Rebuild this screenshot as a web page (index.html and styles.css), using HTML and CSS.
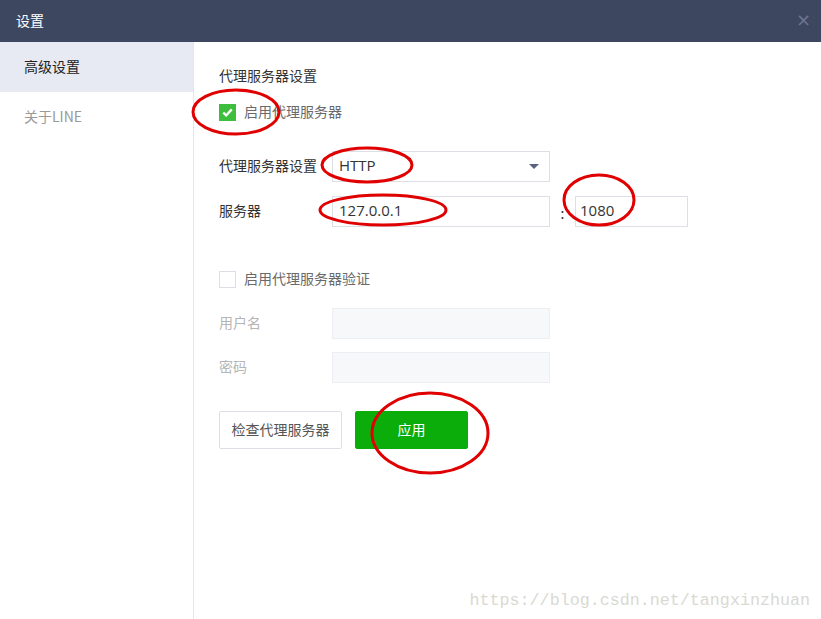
FILE: index.html
```html
<!DOCTYPE html>
<html lang="zh">
<head>
<meta charset="utf-8">
<title>设置</title>
<link rel="stylesheet" href="styles.css">
</head>
<body>
<div class="window">
  <header class="titlebar">
    <span class="title">设置</span>
    <span class="close">×</span>
  </header>
  <div class="main">
    <nav class="sidebar">
      <div class="nav-item active">高级设置</div>
      <div class="nav-item">关于LINE</div>
    </nav>
    <section class="content">
      <h2 class="heading">代理服务器设置</h2>
      <label class="check-row">
        <span class="checkbox checked">
          <svg width="11" height="9" viewBox="0 0 11 9"><path d="M1.3 4.6 L4.2 7.3 L9.8 1.4" fill="none" stroke="#fff" stroke-width="2.3"/></svg>
        </span>
        <span class="check-label">启用代理服务器</span>
      </label>
      <div class="field-row row-select">
        <span class="label">代理服务器设置</span>
        <div class="select">
          <span>HTTP</span>
          <svg class="arrow" width="10" height="5" viewBox="0 0 10 5"><path d="M0 0 H10 L5 5 Z" fill="#59627a"/></svg>
        </div>
      </div>
      <div class="field-row row-server">
        <span class="label">服务器</span>
        <div class="input">127.0.0.1</div>
        <span class="colon">:</span>
        <div class="input port">1080</div>
      </div>
      <label class="check-row row-auth">
        <span class="checkbox"></span>
        <span class="check-label">启用代理服务器验证</span>
      </label>
      <div class="field-row row-user disabled">
        <span class="label">用户名</span>
        <div class="input"></div>
      </div>
      <div class="field-row row-pass disabled">
        <span class="label">密码</span>
        <div class="input"></div>
      </div>
      <div class="buttons">
        <button class="btn btn-outline">检查代理服务器</button>
        <button class="btn btn-primary">应用</button>
      </div>
    </section>
  </div>
  <svg class="annotations" width="821" height="619" viewBox="0 0 821 619">
    <g fill="none" stroke="#e00000" stroke-width="3">
      <ellipse cx="236" cy="112" rx="43" ry="22"/>
      <ellipse cx="367" cy="165" rx="45" ry="17"/>
      <ellipse cx="383" cy="210" rx="63" ry="15"/>
      <ellipse cx="599" cy="200" rx="35" ry="25"/>
      <ellipse cx="430" cy="433" rx="58" ry="40"/>
    </g>
  </svg>
  <div class="watermark">https://blog.csdn.net/tangxinzhuan</div>
</div>
</body>
</html>
```

FILE: styles.css
```css
* { box-sizing: border-box; }
html, body { margin: 0; padding: 0; }
body {
  width: 821px;
  height: 619px;
  background: #fff;
  font-family: "Noto Sans CJK SC", "Noto Sans", sans-serif;
  font-size: 14px;
  color: #333;
  overflow: hidden;
}
.window {
  position: relative;
  width: 821px;
  height: 619px;
  display: flex;
  flex-direction: column;
}
.titlebar {
  height: 42px;
  flex: none;
  background: #3e4760;
  display: flex;
  align-items: center;
  justify-content: space-between;
  padding: 0 10px 2px 16px;
}
.title {
  color: #fff;
  font-size: 14px;
  line-height: 20px;
}
.close {
  color: #6c7590;
  font-family: "DejaVu Sans", sans-serif;
  font-size: 18px;
  line-height: 20px;
}
.main {
  flex: 1;
  display: flex;
}
.sidebar {
  width: 194px;
  flex: none;
  border-right: 1px solid #e6e6e6;
}
.nav-item {
  height: 50px;
  display: flex;
  align-items: center;
  padding-left: 24px;
  padding-bottom: 2px;
  font-size: 14px;
  color: #999;
}
.nav-item.active {
  background: #e7eaf2;
  color: #222;
}
.content {
  flex: 1;
  padding: 23px 0 0 25px;
}
.heading {
  margin: 0;
  font-size: 14px;
  font-weight: normal;
  line-height: 20px;
  color: #333;
}
.check-row {
  display: flex;
  align-items: center;
  height: 20px;
  margin-top: 17px;
}
.checkbox {
  width: 17px;
  height: 17px;
  border: 1px solid #dcdfe6;
  background: #fff;
  display: flex;
  align-items: center;
  justify-content: center;
  margin-right: 8px;
}
.checkbox.checked {
  background: #3dbf3d;
  border-color: #3dbf3d;
}
.check-label {
  color: #6a6a6a;
  line-height: 20px;
  padding-bottom: 2px;
}
.field-row {
  display: flex;
  align-items: center;
  height: 31px;
}
.row-select { margin-top: 29px; }
.row-server { margin-top: 14px; }
.row-auth { margin-top: 42px; }
.row-user { margin-top: 19px; }
.row-pass { margin-top: 13px; }
.label {
  width: 113px;
  flex: none;
  color: #333;
  padding-bottom: 4px;
}
.select, .input {
  width: 218px;
  height: 31px;
  border: 1px solid #dcdfe6;
  background: #fff;
  display: flex;
  align-items: center;
  padding: 0 6px 3px;
  font-family: "Open Sans", "Noto Sans", sans-serif;
  font-size: 15px;
  color: #333;
}
.select {
  justify-content: space-between;
  padding-right: 10px;
}
.select .arrow { margin-top: 3px; }
.colon {
  width: 25px;
  text-align: center;
  color: #333;
  padding-top: 2px;
}
.input.port { width: 113px; padding-left: 4px; }
.disabled .label { color: #b5b5b5; }
.disabled .input {
  background: #f7f8f9;
  border-color: #eceef1;
}
.buttons {
  display: flex;
  gap: 13px;
  margin-top: 28px;
}
.btn {
  height: 38px;
  font-family: "Noto Sans CJK SC", sans-serif;
  font-size: 14px;
  padding: 0 0 3px;
  cursor: pointer;
  border-radius: 2px;
}
.btn-outline {
  width: 123px;
  background: #fff;
  border: 1px solid #dcdfe6;
  color: #555;
}
.btn-primary {
  width: 113px;
  background: #0aad0a;
  border: 1px solid #0aad0a;
  color: #fff;
}
.annotations {
  position: absolute;
  left: 0;
  top: 0;
  pointer-events: none;
}
.watermark {
  position: absolute;
  right: 11px;
  bottom: 8px;
  font-family: "Liberation Mono", monospace;
  font-size: 16.7px;
  color: #d9d9d3;
  line-height: 20px;
}
```
